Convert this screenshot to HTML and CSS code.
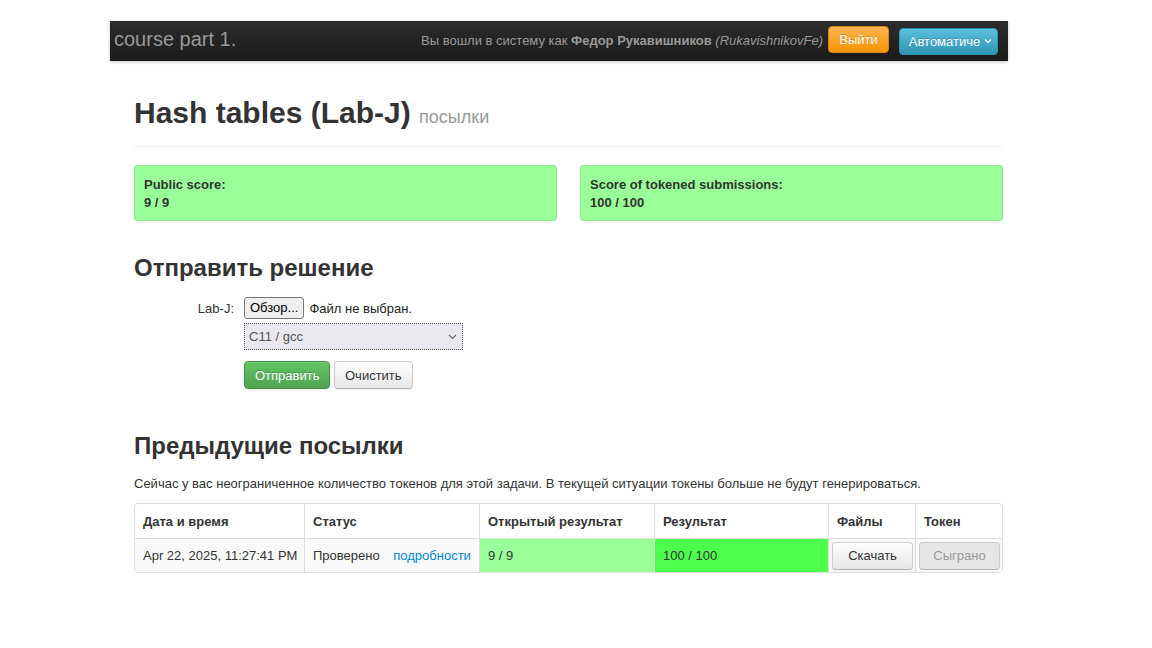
FILE: index.html
```html
<!DOCTYPE html>
<html lang="ru">
<head>
<meta charset="utf-8">
<link rel="stylesheet" href="styles.css">
</head>
<body>
<div class="navbar">
  <div class="brand">course part 1.</div>
  <div class="nav-right">
    <span class="user">Вы вошли в систему как <b>Федор Рукавишников</b> <i>(RukavishnikovFe)</i></span>
    <button class="btn-logout">Выйти</button>
    <button class="btn-lang">Автоматиче <svg width="8" height="6" viewBox="0 0 8 6"><path d="M1 1.5 L4 4.5 L7 1.5" fill="none" stroke="#fff" stroke-width="1.2"/></svg></button>
  </div>
</div>
<div class="container">
  <div class="page-header">
    <h1>Hash tables (Lab-J) <small>посылки</small></h1>
  </div>
  <div class="scores">
    <div class="score-box"><b>Public score:</b><br><b>9 / 9</b></div>
    <div class="score-box"><b>Score of tokened submissions:</b><br><b>100 / 100</b></div>
  </div>
  <h2 class="h-submit">Отправить решение</h2>
  <div class="form">
    <div class="form-row">
      <label class="form-label">Lab-J:</label>
      <div class="file-input"><span class="file-btn">Обзор...</span> Файл не выбран.</div>
    </div>
    <div class="form-row">
      <span class="form-label"></span>
      <div class="select">C11 / gcc <svg width="9" height="6" viewBox="0 0 9 6"><path d="M1 1 L4.5 4.5 L8 1" fill="none" stroke="#666" stroke-width="1.1"/></svg></div>
    </div>
    <div class="form-row actions">
      <span class="form-label"></span>
      <button class="btn btn-success">Отправить</button>
      <button class="btn">Очистить</button>
    </div>
  </div>
  <h2 class="h-prev">Предыдущие посылки</h2>
  <p class="tokens">Сейчас у вас неограниченное количество токенов для этой задачи. В текущей ситуации токены больше не будут генерироваться.</p>
  <table class="subs">
    <thead>
      <tr>
        <th class="c1">Дата и время</th>
        <th class="c2">Статус</th>
        <th class="c3">Открытый результат</th>
        <th class="c4">Результат</th>
        <th class="c5">Файлы</th>
        <th class="c6">Токен</th>
      </tr>
    </thead>
    <tbody>
      <tr>
        <td class="stripe nowrap">Apr 22, 2025, 11:27:41 PM</td>
        <td class="stripe nowrap">Проверено <a class="details">подробности</a></td>
        <td class="score-light">9 / 9</td>
        <td class="score-full">100 / 100</td>
        <td class="stripe btn-cell"><button class="btn btn-small">Скачать</button></td>
        <td class="stripe btn-cell"><button class="btn btn-small disabled">Сыграно</button></td>
      </tr>
    </tbody>
  </table>
</div>
</body>
</html>
```
FILE: styles.css
```css
* { box-sizing: border-box; }
body {
  margin: 0;
  font-family: "Liberation Sans", Arial, sans-serif;
  font-size: 13px;
  color: #333;
  background: #fff;
  padding-top: 21px;
}
.navbar {
  width: 898px;
  margin-left: 110px;
  height: 40px;
  background: linear-gradient(#2c2c2c, #1b1b1b);
  display: flex;
  align-items: center;
  justify-content: space-between;
  box-shadow: 0 1px 3px rgba(0,0,0,0.25);
}
.brand {
  font-size: 20px;
  color: #999;
  padding-left: 4px;
  margin-top: -4px;
}
.nav-right {
  display: flex;
  align-items: center;
  padding-right: 10px;
}
.user {
  color: #999;
  font-size: 13px;
  margin-top: -2px;
}
.user b { color: #999; }
.btn-logout {
  margin-left: 5px;
  margin-top: -4px;
  height: 27px;
  width: 61px;
  border: 1px solid #d98310;
  border-radius: 4px;
  background: linear-gradient(#fbb450, #f89406);
  color: #fff;
  font-family: inherit;
  font-size: 13px;
  padding: 0;
  text-shadow: 0 -1px 0 rgba(0,0,0,0.2);
}
.btn-lang {
  margin-left: 10px;
  height: 27px;
  width: 99px;
  border: 1px solid #2f96b4;
  border-radius: 4px;
  background: linear-gradient(#5bc0de, #2f96b4);
  color: #fff;
  font-family: inherit;
  font-size: 13px;
  padding: 0 0 0 4px;
  display: flex;
  align-items: center;
  gap: 4px;
  justify-content: center;
  text-shadow: 0 -1px 0 rgba(0,0,0,0.2);
}
.container {
  width: 869px;
  margin-left: 134px;
}
.page-header {
  border-bottom: 1px solid #eee;
  padding-top: 32px;
  padding-bottom: 9px;
}
h1 {
  margin: 0;
  font-size: 30px;
  line-height: 40px;
  font-weight: bold;
  color: #333;
}
h1 small {
  font-size: 18px;
  font-weight: normal;
  color: #999;
}
.scores {
  display: flex;
  gap: 23px;
  margin-top: 18px;
}
.score-box {
  flex: 1;
  height: 56px;
  background: #99ff99;
  border: 1px solid #8de88d;
  border-radius: 3px;
  padding: 10px 9px;
  line-height: 18px;
  color: #333;
}
h2 {
  margin: 0;
  font-size: 24px;
  font-weight: bold;
  line-height: 30px;
  color: #333;
}
.h-submit { margin-top: 32px; }
.form { margin-top: 14px; }
.form-row {
  display: flex;
  align-items: center;
  margin-bottom: 4px;
}
.form-label {
  width: 110px;
  text-align: right;
  padding-right: 10px;
  color: #333;
}
.file-input {
  color: #222;
  display: flex;
  align-items: center;
  gap: 5px;
}
.file-btn {
  display: inline-block;
  border: 1px solid #777;
  border-radius: 3px;
  background: #efefef;
  padding: 2px 5px;
  color: #000;
  height: 22px;
  line-height: 16px;
}
.select {
  width: 219px;
  height: 27px;
  border: 1px dotted #555;
  background: #e8e8ee;
  color: #555;
  padding: 0 5px 0 4px;
  display: flex;
  align-items: center;
  justify-content: space-between;
}
.actions { margin-top: 11px; }
.btn {
  font-family: inherit;
  font-size: 13px;
  height: 28px;
  padding: 0 10px;
  border: 1px solid #ccc;
  border-bottom-color: #b3b3b3;
  border-radius: 4px;
  background: linear-gradient(#fff, #e6e6e6);
  color: #333;
  margin-right: 4px;
  box-shadow: inset 0 1px 0 rgba(255,255,255,0.2), 0 1px 2px rgba(0,0,0,0.05);
}
.btn-success {
  background: linear-gradient(#62c462, #51a351);
  border-color: #468d46;
  color: #fff;
  width: 86px;
  text-shadow: 0 -1px 0 rgba(0,0,0,0.2);
}
.h-prev { margin-top: 42px; }
.tokens {
  margin: 13px 0 0;
  line-height: 20px;
}
.subs {
  margin-top: 9px;
  width: 100%;
  border-collapse: separate;
  border-spacing: 0;
  border: 1px solid #ddd;
  border-radius: 4px;
  table-layout: fixed;
}
.subs th, .subs td {
  text-align: left;
  padding: 0 8px;
  height: 34px;
  border-left: 1px solid #ddd;
  vertical-align: middle;
}
.subs th:first-child, .subs td:first-child { border-left: 0; }
.subs td { border-top: 1px solid #ddd; }
.subs th { font-weight: bold; }
.subs td.nowrap { white-space: nowrap; }
.c1 { width: 169px; }
.c2 { width: 175px; }
.c3 { width: 175px; }
.c4 { width: 174px; }
.c5 { width: 87px; }
.c6 { width: 87px; }
.stripe { background: #f9f9f9; }
.score-light { background: #99ff99; }
.score-full { background: #4cff4c; }
.details { color: #0088cc; margin-left: 10px; }
.subs td.btn-cell { padding: 0 3px; }
.btn-small {
  width: 81px;
  height: 28px;
  padding: 0;
  margin: 0;
}
.disabled {
  background: #e6e6e6;
  color: #999;
  box-shadow: none;
}
```
